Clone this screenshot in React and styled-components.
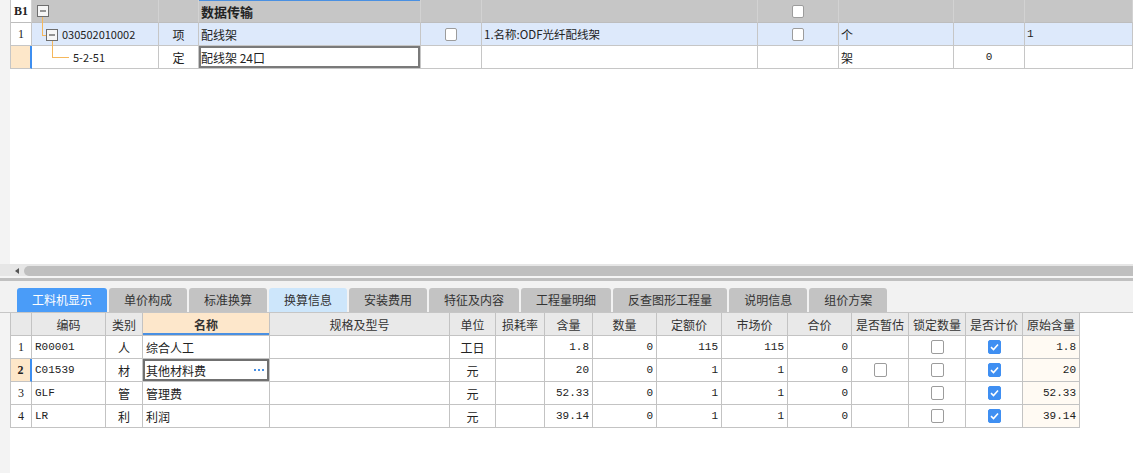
import React from "react";
import styled, { createGlobalStyle, css } from "styled-components";

const SANS = `"Noto Sans CJK SC", "Noto Sans", sans-serif`;
const MONO = `"Liberation Mono", "Noto Sans CJK SC", monospace`;
const SERIF = `"Liberation Serif", "Noto Sans CJK SC", serif`;

const GlobalStyle = createGlobalStyle`
  html, body {
    margin: 0;
    padding: 0;
    background: #fff;
  }
  body {
    font-family: ${SANS};
    font-size: 12px;
    color: #222;
  }
  * {
    box-sizing: border-box;
  }
`;

const Page = styled.div`
  width: 1133px;
  height: 473px;
  display: flex;
  flex-direction: column;
  overflow: hidden;
  background: #fff;
`;

const Panel = styled.div`
  display: flex;
  height: ${(p) => (p.$h ? `${p.$h}px` : "auto")};
  flex: ${(p) => (p.$h ? "none" : 1)};
`;

const Strip = styled.div`
  width: 10px;
  flex: none;
  background: #f3f3f3;
`;

const Area = styled.div`
  flex: 1;
  background: #fff;
  min-width: 0;
`;

/* ---------- top grid ---------- */

const TOP_COLS = "21px 127px 40px 222px 61px 276px 81px 115px 71px 1fr";

const TopGrid = styled.div`
  border-left: 1px solid #c6c6c6;
`;

const TopRow = styled.div`
  display: grid;
  grid-template-columns: ${TOP_COLS};
  height: 23px;
  background: ${(p) => p.$bg || "#fff"};
`;

const TCell = styled.div`
  position: relative;
  display: flex;
  align-items: center;
  justify-content: ${(p) =>
    p.$align === "center" ? "center" : p.$align === "right" ? "flex-end" : "flex-start"};
  padding: 0 2px 0 ${(p) => (p.$pad != null ? p.$pad : 2)}px;
  border-right: 1px solid ${(p) => (p.$head ? "#d2d2d2" : "#c6c6c6")};
  border-bottom: 1px solid ${(p) => (p.$head ? "#bdbdbd" : "#c6c6c6")};
  background: ${(p) => p.$bg || "transparent"};
  font-family: ${(p) => (p.$font === "mono" ? MONO : p.$font === "serif" ? SERIF : SANS)};
  font-size: ${(p) => p.$size || 12}px;
  font-weight: ${(p) => (p.$bold ? 700 : 400)};
  color: #222;
  white-space: nowrap;
  overflow: visible;
  ${(p) =>
    p.$topLine &&
    css`
      box-shadow: inset 0 1px 0 #4a90e2;
    `}
  ${(p) =>
    p.$mark &&
    css`
      border-right: 2px solid #3d8ef0;
    `}
  ${(p) =>
    p.$focus &&
    css`
      box-shadow: inset 0 0 0 2px #7a7a7a;
    `}
`;

const TreeSvg = styled.svg`
  position: absolute;
  left: 0;
  top: 0;
  overflow: visible;
  pointer-events: none;
`;

const ORANGE = "#f5b75c";

function MinusBox({ x, y }) {
  return (
    <g>
      <rect x={x + 0.5} y={y + 0.5} width="11" height="11" fill="#f6f6f6" stroke="#6e6e6e" />
      <line x1={x + 3} y1={y + 6} x2={x + 9} y2={y + 6} stroke="#333" />
    </g>
  );
}

function Tree({ level }) {
  if (level === 0)
    return (
      <TreeSvg width="40" height="23">
        <line x1="10.5" y1="17" x2="10.5" y2="23" stroke={ORANGE} />
        <MinusBox x={5} y={5} />
      </TreeSvg>
    );
  if (level === 1)
    return (
      <TreeSvg width="40" height="23">
        <line x1="10.5" y1="0" x2="10.5" y2="12.5" stroke={ORANGE} />
        <line x1="10" y1="12.5" x2="14" y2="12.5" stroke={ORANGE} />
        <line x1="20.5" y1="18" x2="20.5" y2="23" stroke={ORANGE} />
        <MinusBox x={14} y={6} />
      </TreeSvg>
    );
  return (
    <TreeSvg width="40" height="23">
      <line x1="20.5" y1="0" x2="20.5" y2="11.5" stroke={ORANGE} />
      <line x1="20" y1="11.5" x2="37" y2="11.5" stroke={ORANGE} />
    </TreeSvg>
  );
}

const Check = styled.span`
  display: inline-flex;
  align-items: center;
  justify-content: center;
  width: ${(p) => p.$w}px;
  height: ${(p) => p.$h}px;
  border: 1px solid ${(p) => (p.$on ? "#3f8ff2" : "#9c9c9c")};
  border-radius: 2px;
  background: ${(p) => (p.$on ? "#3f8ff2" : "#fff")};
`;

function CheckBox({ on, w = 13, h = 13 }) {
  return (
    <Check $on={on} $w={w} $h={h}>
      {on && (
        <svg width="9" height="8" viewBox="0 0 9 8">
          <path d="M1 4.2 L3.5 6.5 L8 1.5" fill="none" stroke="#fff" strokeWidth="1.6" />
        </svg>
      )}
    </Check>
  );
}

/* ---------- scroll / splitter / tabs ---------- */

const ScrollRow = styled.div`
  height: 14px;
  display: flex;
  align-items: flex-start;
  padding-top: 2px;
  background: #e6e6e6;
  border-bottom: 2px solid #f5f5f5;
`;

const Arrow = styled.span`
  width: 0;
  height: 0;
  margin: 2px 0 0 15px;
  border-right: 4px solid #555;
  border-top: 3px solid transparent;
  border-bottom: 3px solid transparent;
`;

const Thumb = styled.div`
  flex: 1;
  height: 10px;
  margin-left: 5px;
  border-radius: 5px 0 0 5px;
  background: #bfbfbf;
`;

const TabBar = styled.div`
  display: flex;
  gap: 2px;
  padding: 7px 0 0 17px;
  height: 35px;
  background: #f2f2f2;
  border-top: 3px solid #c0c0c0;
  border-bottom: 1px solid #c6c6c6;
`;

const Tab = styled.div`
  height: 24px;
  padding: 0 15px;
  display: flex;
  align-items: center;
  border-radius: 3px 3px 0 0;
  font-size: 12px;
  line-height: 1;
  background: ${(p) =>
    p.$state === "active" ? "#4a9cf8" : p.$state === "hover" ? "#cde6fb" : "#c3c3c3"};
  color: ${(p) => (p.$state === "active" ? "#fff" : "#333")};
`;

/* ---------- bottom table ---------- */

const BCOLS = "21px 74px 37px 127px 180px 46px 49px 48px 64px 65px 66px 64px 57px 57px 57px 57px";

const Table = styled.div`
  width: 1070px;
  border-left: 1px solid #c3c3c3;
`;

const BRow = styled.div`
  display: grid;
  grid-template-columns: ${BCOLS};
  height: 23px;
  background: ${(p) => (p.$head ? "#e9e9e9" : "#fff")};
`;

const BCell = styled.div`
  display: flex;
  align-items: center;
  justify-content: ${(p) =>
    p.$align === "center" ? "center" : p.$align === "right" ? "flex-end" : "flex-start"};
  gap: 4px;
  padding: 0 3px;
  border-right: 1px solid #c3c3c3;
  border-bottom: 1px solid #c3c3c3;
  background: ${(p) => p.$bg || "transparent"};
  font-family: ${(p) => (p.$font === "mono" ? MONO : p.$font === "serif" ? SERIF : SANS)};
  font-size: ${(p) => p.$size || 12}px;
  font-weight: ${(p) => (p.$bold ? 700 : 400)};
  color: ${(p) => (p.$head ? "#333" : "#222")};
  white-space: nowrap;
  overflow: hidden;
  ${(p) =>
    p.$underline &&
    css`
      box-shadow: inset 0 -2px 0 #4a90e2;
    `}
  ${(p) =>
    p.$mark &&
    css`
      border-right: 2px solid #3d8ef0;
    `}
  ${(p) =>
    p.$focus &&
    css`
      box-shadow: inset 0 0 0 2px #707070;
      justify-content: space-between;
    `}
`;

const Dots = styled.span`
  display: flex;
  gap: 2px;
  margin-right: 2px;
`;

const Dot = styled.i`
  width: 2px;
  height: 2px;
  background: #4a90e2;
`;

const TABS = [
  ["工料机显示", "active"],
  ["单价构成"],
  ["标准换算"],
  ["换算信息", "hover"],
  ["安装费用"],
  ["特征及内容"],
  ["工程量明细"],
  ["反查图形工程量"],
  ["说明信息"],
  ["组价方案"],
];

const HEADS = [
  "",
  "编码",
  "类别",
  "名称",
  "规格及型号",
  "单位",
  "损耗率",
  "含量",
  "数量",
  "定额价",
  "市场价",
  "合价",
  "是否暂估",
  "锁定数量",
  "是否计价",
  "原始含量",
];

const ROWS = [
  { n: "1", code: "R00001", kind: "人", name: "综合人工", unit: "工日", qty: "1.8", quota: "115", market: "115" },
  { n: "2", code: "C01539", kind: "材", name: "其他材料费", unit: "元", qty: "20", quota: "1", market: "1", est: true, active: true },
  { n: "3", code: "GLF", kind: "管", name: "管理费", unit: "元", qty: "52.33", quota: "1", market: "1" },
  { n: "4", code: "LR", kind: "利", name: "利润", unit: "元", qty: "39.14", quota: "1", market: "1" },
];

const ORIG_BG = "#fffaf3";
const NUM = 11;

export default function App() {
  return (
    <Page>
      <GlobalStyle />
      <Panel $h={264}>
        <Strip />
        <Area>
          <TopGrid>
            <TopRow $bg="#c6c6c6">
              <TCell $head $align="center" $font="serif" $bold $bg="#fff">
                B1
              </TCell>
              <TCell $head>
                <Tree level={0} />
              </TCell>
              <TCell $head />
              <TCell $head $bold $size={13} $topLine>
                数据传输
              </TCell>
              <TCell $head />
              <TCell $head />
              <TCell $head $align="center">
                <CheckBox w={12} h={13} />
              </TCell>
              <TCell $head />
              <TCell $head />
              <TCell $head />
            </TopRow>
            <TopRow $bg="#dde9fb">
              <TCell $align="center" $font="serif" $bg="#fff">
                1
              </TCell>
              <TCell $pad={30} $size={11}>
                <Tree level={1} />
                030502010002
              </TCell>
              <TCell $align="center">项</TCell>
              <TCell>配线架</TCell>
              <TCell $align="center">
                <CheckBox w={12} h={13} />
              </TCell>
              <TCell $size={11.5}>1.名称:ODF光纤配线架</TCell>
              <TCell $align="center">
                <CheckBox w={12} h={13} />
              </TCell>
              <TCell>个</TCell>
              <TCell />
              <TCell $font="mono" $size={NUM}>
                1
              </TCell>
            </TopRow>
            <TopRow>
              <TCell $bg="#fde7c9" $mark />
              <TCell $pad={41} $size={11}>
                <Tree level={2} />
                5-2-51
              </TCell>
              <TCell $align="center">定</TCell>
              <TCell $focus>配线架 24口</TCell>
              <TCell />
              <TCell />
              <TCell />
              <TCell>架</TCell>
              <TCell $align="center" $font="mono" $size={NUM}>
                0
              </TCell>
              <TCell />
            </TopRow>
          </TopGrid>
        </Area>
      </Panel>

      <ScrollRow>
        <Arrow />
        <Thumb />
      </ScrollRow>

      <TabBar>
        {TABS.map(([label, state]) => (
          <Tab key={label} $state={state}>
            {label}
          </Tab>
        ))}
      </TabBar>

      <Panel>
        <Strip />
        <Area>
          <Table>
            <BRow $head>
              {HEADS.map((h, i) => (
                <BCell
                  key={i}
                  $head
                  $align="center"
                  $bold={h === "名称"}
                  $bg={h === "名称" ? "#fde7cb" : undefined}
                  $underline={h === "名称"}
                >
                  {h}
                </BCell>
              ))}
            </BRow>
            {ROWS.map((r) => (
              <BRow key={r.n}>
                <BCell
                  $align="center"
                  $font="serif"
                  $bold={r.active}
                  $bg={r.active ? "#fde7c9" : undefined}
                  $mark={r.active}
                >
                  {r.n}
                </BCell>
                <BCell $font="mono" $size={NUM}>
                  {r.code}
                </BCell>
                <BCell $align="center">{r.kind}</BCell>
                <BCell $focus={r.active}>
                  <span>{r.name}</span>
                  {r.active && (
                    <Dots>
                      <Dot />
                      <Dot />
                      <Dot />
                    </Dots>
                  )}
                </BCell>
                <BCell />
                <BCell $align="center">{r.unit}</BCell>
                <BCell />
                <BCell $align="right" $font="mono" $size={NUM}>
                  {r.qty}
                </BCell>
                <BCell $align="right" $font="mono" $size={NUM}>
                  0
                </BCell>
                <BCell $align="right" $font="mono" $size={NUM}>
                  {r.quota}
                </BCell>
                <BCell $align="right" $font="mono" $size={NUM}>
                  {r.market}
                </BCell>
                <BCell $align="right" $font="mono" $size={NUM}>
                  0
                </BCell>
                <BCell $align="center">{r.est && <CheckBox w={13} h={14} />}</BCell>
                <BCell $align="center">
                  <CheckBox w={13} h={14} />
                </BCell>
                <BCell $align="center">
                  <CheckBox on w={13} h={14} />
                </BCell>
                <BCell $align="right" $font="mono" $size={NUM} $bg={ORIG_BG}>
                  {r.qty}
                </BCell>
              </BRow>
            ))}
          </Table>
        </Area>
      </Panel>
    </Page>
  );
}
